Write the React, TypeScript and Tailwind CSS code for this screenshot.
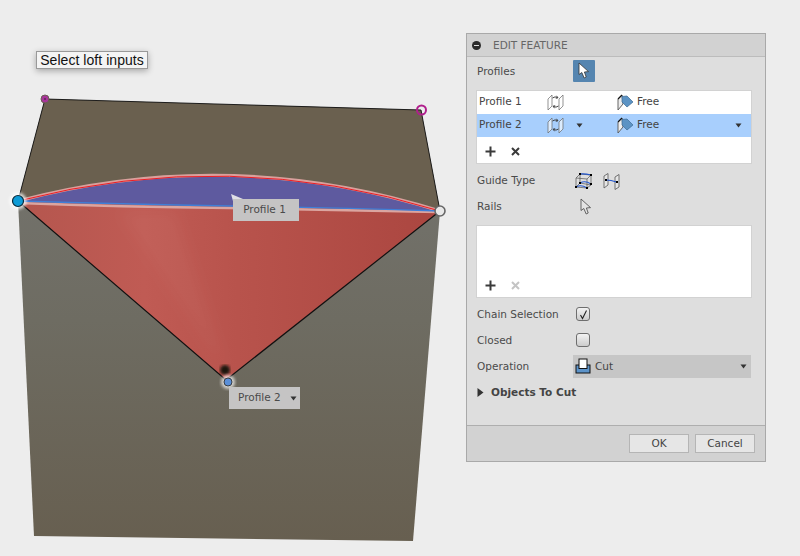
import React from 'react';

const uiFont = "font-['DejaVu_Sans',sans-serif]";

// Cursor arrow used by the selection buttons
const Arrow = ({ fill = '#fff', stroke = '#333' }: { fill?: string; stroke?: string }) => (
  <svg width="12" height="18" viewBox="0 0 12 18">
    <path d="M1 1 L1 12.5 L3.8 10.5 L6.2 16 L8.2 15 L6.4 10 L10.5 9.6 Z" fill={fill} stroke={stroke} strokeWidth="0.8" strokeLinejoin="round" />
  </svg>
);

const ProfileIcon = () => (
  <svg width="17" height="17" viewBox="0 0 17 17" fill="none">
    <path d="M1 5 L5 1 L5 12 L1 16 Z" fill="#fff" fillOpacity="0.6" stroke="#666" strokeWidth="0.7" />
    <path d="M12 5 L16 1 L16 12 L12 16 Z" fill="#fff" fillOpacity="0.6" stroke="#666" strokeWidth="0.7" />
    <path d="M5.5 4 Q8 2 10.500 3.500 M9.500 1.800 L11 3.800 L8.800 4.300" stroke="#333" strokeWidth="0.9" />
    <path d="M11.500 12 Q9 14 6.500 12.500 M7.500 14.200 L6 12.200 L8.200 11.700" stroke="#333" strokeWidth="0.9" />
  </svg>
);

const FreeIcon = () => (
  <svg width="17" height="17" viewBox="0 0 17 17" fill="none">
    <path d="M1 5 L5 1 L6 10 L1 16 Z" fill="#eeeeee" stroke="#555" strokeWidth="0.9" />
    <path d="M1 5 L5 1" stroke="#111" strokeWidth="1.200" />
    <path d="M5 2.500 L10 2 L16 8 L10 13 L5 8 Z" fill="#5c93c4" stroke="#3c6a94" strokeWidth="0.7" />
  </svg>
);

const Caret = ({ className = '' }: { className?: string }) => (
  <svg width="7" height="5" viewBox="0 0 7 5" className={className}>
    <path d="M0.5 0.5 H6.5 L3.5 4.5 Z" fill="#333" />
  </svg>
);

const AddRemove = ({ disabled = false }: { disabled?: boolean }) => (
  <div className="flex items-center gap-[15px] pl-[8px]">
    <svg width="11" height="11" viewBox="0 0 11 11"><path d="M5.5 0.5 V10.5 M0.5 5.5 H10.5" stroke="#3a3a3a" strokeWidth="2" /></svg>
    <svg width="9" height="9" viewBox="0 0 9 9"><path d="M1 1 L8 8 M8 1 L1 8" stroke={disabled ? '#c4c4c4' : '#3a3a3a'} strokeWidth="2" /></svg>
  </div>
);

const ProfileRow = ({ name, selected = false }: { name: string; selected?: boolean }) => (
  <div className={`flex h-[23px] items-center pl-[2px] ${selected ? 'bg-[#a8cffd]' : 'bg-white'}`}>
    <span className="w-[68px] pb-[2px] text-[#444]">{name}</span>
    <ProfileIcon />
    <span className="flex w-[53px] justify-start pl-[12px]">{selected && <Caret />}</span>
    <FreeIcon />
    <span className="ml-[3px] pb-[2px] text-[#444]">Free</span>
    {selected && <Caret className="ml-auto mr-[9px]" />}
  </div>
);

const Label = ({ children, nudge = false }: { children: React.ReactNode; nudge?: boolean }) => (
  <span className={`w-[96px] shrink-0 text-[#4a4a4a] ${nudge ? 'pt-[2px]' : ''}`}>{children}</span>
);

const Checkbox = ({ checked = false }: { checked?: boolean }) => (
  <span className="flex h-[14px] w-[14px] items-center justify-center rounded-[3px] border border-[#6e6e6e] bg-gradient-to-b from-[#f2f2f2] to-[#cccccc]">
    {checked && (
      <svg width="11" height="11" viewBox="0 0 11 11"><path d="M2.5 6 L4.5 9.5 L8.5 1.5" fill="none" stroke="#222" strokeWidth="1.1" /></svg>
    )}
  </span>
);

// The modelled surface: a free canvas, so it is one drawing behind the dialog
const Scene = () => (
  <svg width="800" height="556" viewBox="0 0 800 556" className="absolute left-0 top-0">
    <defs>
      <linearGradient id="lower" x1="0" y1="200" x2="0" y2="541" gradientUnits="userSpaceOnUse">
        <stop offset="0" stopColor="#72716a" />
        <stop offset="0.35" stopColor="#6e6c62" />
        <stop offset="1" stopColor="#675f50" />
      </linearGradient>
      <linearGradient id="red" x1="18" y1="0" x2="440" y2="0" gradientUnits="userSpaceOnUse">
        <stop offset="0" stopColor="#b4564e" />
        <stop offset="0.3" stopColor="#c05b54" />
        <stop offset="0.52" stopColor="#b8534c" />
        <stop offset="1" stopColor="#ab4640" />
      </linearGradient>
      <filter id="soft"><feGaussianBlur stdDeviation="1.6" /></filter>
      <filter id="fan"><feGaussianBlur stdDeviation="7" /></filter>
    </defs>
    <path d="M45 99 L421 110 L440 211 L413 541 L34 536 L18 201 Z" fill="url(#lower)" />
    <path d="M18 201 L45 99 L421 110 L440 211 Q230 145 18 201 Z" fill="#6a604f" />
    <path d="M18 201 L45 99 L421 110 L440 211" fill="none" stroke="#111" strokeWidth="0.9" />
    <path d="M18 201 Q120 204 230 206 Q340 208 440 211 L226 380 Z" fill="url(#red)" />
    <path d="M226 372 L120 212 L175 212 Z" fill="#fff" fillOpacity="0.03" filter="url(#fan)" />
    <path d="M18 201 Q230 145 440 211 Q340 208 230 206 Q120 204 18 201 Z" fill="#5e5a9f" />
    <path d="M18 201 Q230 145 440 211" fill="none" stroke="#d9a09c" strokeWidth="3" />
    <path d="M18 201 Q230 146.500 440 211" fill="none" stroke="#ee1c24" strokeWidth="1" />
    <path d="M18 203 Q120 207 230 208 Q340 210 438 212" fill="none" stroke="#dba5a0" strokeWidth="2.500" />
    <path d="M18 201 Q120 204 230 206 Q340 208 440 211" fill="none" stroke="#3f7fd8" strokeWidth="1.300" />
    <path d="M18 201 L226 380 L440 211" fill="none" stroke="#111" strokeWidth="1.200" />
    <circle cx="225" cy="370" r="5" fill="#1d1210" filter="url(#soft)" />
    <circle cx="45" cy="99" r="4" fill="#a8359a" stroke="#6b5f55" strokeWidth="1" />
    <circle cx="45" cy="99" r="0.800" fill="#222" />
    <circle cx="421.500" cy="110" r="4.500" fill="none" stroke="#b01e8c" strokeWidth="2" />
    <circle cx="18" cy="201" r="8.500" fill="#fff" fillOpacity="0.75" filter="url(#soft)" />
    <circle cx="18" cy="201" r="5.500" fill="#0d9bd6" stroke="#0a2a3a" strokeWidth="1.200" />
    <circle cx="440" cy="211" r="5" fill="#e8e8e8" stroke="#666" strokeWidth="1.600" />
    <circle cx="228" cy="382" r="7" fill="#fff" fillOpacity="0.7" filter="url(#soft)" />
    <circle cx="228" cy="382" r="4" fill="#5a8fd8" stroke="#333" strokeWidth="0.900" />
    <path d="M231 194 L243 199 L233 201 Z" fill="#e0dfe6" />
  </svg>
);

export default function App() {
  return (
    <div className={`relative h-[556px] w-[800px] overflow-hidden bg-[#ededed] text-[10.5px] ${uiFont}`}>
      <Scene />

      {/* Prompt and on-canvas labels */}
      <div className="absolute left-[36px] top-[51px] flex h-[18px] w-[112px] items-center justify-center border border-[#999] bg-[#f4f4f4] font-['Liberation_Sans',sans-serif] text-[14px] tracking-[0.05px] text-[#111] shadow-[0_2px_6px_rgba(0,0,0,0.3)]">
        Select loft inputs
      </div>
      <div className="absolute left-[233px] top-[199px] flex h-[22px] w-[66px] items-center justify-center bg-[#c5c4c4] pr-[3px] text-[#4a4a4a]">
        Profile 1
      </div>
      <div className="absolute left-[229px] top-[387px] flex h-[22px] w-[71px] items-center gap-[9px] bg-[#c5c4c4] pl-[9px] text-[#4a4a4a]">
        Profile 2
        <Caret />
      </div>

      <div className="pl-[466px] pt-[33px]">
        <div className="relative flex h-[429px] w-[300px] flex-col border border-[#a9a9a9] bg-[#dedede]">
          <div className="flex h-[23px] shrink-0 items-center border-b border-[#bcbcbc] bg-[#d2d2d2] pl-[5px] pt-[1px]">
            <span className="flex h-[9px] w-[9px] items-center justify-center rounded-full bg-[#2b2b2b]">
              <span className="h-[1.5px] w-[5px] bg-[#ddd]" />
            </span>
            <span className="ml-[12px] text-[#666]">EDIT FEATURE</span>
          </div>

          <div className="flex flex-1 flex-col px-[9px]">
            <div className="mt-[2px] flex h-[23px] items-center pl-[1px]">
              <Label nudge>Profiles</Label>
              <span className="flex h-[22px] w-[22px] items-center justify-center rounded-[1px] bg-[#5585b0]">
                <Arrow />
              </span>
            </div>

            <div className="mt-[8px] flex h-[74px] w-[276px] flex-col border border-[#d2d2d2] bg-white">
              <ProfileRow name="Profile 1" />
              <ProfileRow name="Profile 2" selected />
              <div className="flex flex-1 items-center pt-[3px]"><AddRemove /></div>
            </div>

            <div className="mt-[4px] flex h-[26px] items-center pl-[1px]">
              <Label>Guide Type</Label>
              <span className="ml-[2px] flex items-center gap-[11px]">
                <svg width="17" height="17" viewBox="0 0 17 17" fill="none">
                  <path d="M1 5 L5 1 L16 2 L16 12 L12 15 L1 14 Z M5 1 L5 10 L16 12 M5 10 L1 14 M1 5 L12 6 L12 15 M12 6 L16 2" stroke="#555" strokeWidth="0.7" />
                  <path d="M5 1 Q10 0.500 16 2 M1 14 Q6 11 12 15 M5 10 Q10 7 16 11" stroke="#2255cc" strokeWidth="1.100" />
                  <g fill="#000"><rect x="4" y="0" width="2" height="2" /><rect x="15" y="1" width="2" height="2" /><rect x="0" y="13" width="2" height="2" /><rect x="11" y="14" width="2" height="2" /><rect x="4" y="9" width="2" height="2" /><rect x="15" y="10" width="2" height="2" /></g>
                </svg>
                <svg width="17" height="17" viewBox="0 0 17 17" fill="none">
                  <path d="M1 3 L5 0.500 L5 12 L1 15 Z M12 4 L16 1.500 L16 14 L12 16.500 Z" fill="#e6e6e6" stroke="#555" strokeWidth="0.8" />
                  <path d="M3 7 Q8 7 13.500 9" stroke="#2255cc" strokeWidth="1.200" />
                  <rect x="2" y="6" width="2" height="2" fill="#000" /><rect x="13" y="8" width="2" height="2" fill="#000" />
                </svg>
              </span>
            </div>

            <div className="flex h-[26px] items-center pl-[1px]">
              <Label>Rails</Label>
              <span className="ml-[7px] flex"><Arrow fill="#e4e4e4" stroke="#444" /></span>
            </div>

            <div className="mt-[5px] flex h-[73px] w-[276px] flex-col justify-end border border-[#d2d2d2] bg-white pb-[6px]">
              <AddRemove disabled />
            </div>

            <div className="mt-[3px] flex h-[26px] items-center pl-[1px]">
              <Label nudge>Chain Selection</Label>
              <span className="ml-[3px] flex"><Checkbox checked /></span>
            </div>
            <div className="flex h-[26px] items-center pl-[1px]">
              <Label nudge>Closed</Label>
              <span className="ml-[3px] flex"><Checkbox /></span>
            </div>
            <div className="flex h-[26px] items-center pl-[1px]">
              <Label nudge>Operation</Label>
              <span className="flex h-[23px] w-[178px] items-center bg-[#c6c6c6] pl-[2px] text-[#444]">
                <svg width="16" height="16" viewBox="0 0 16 16">
                  <rect x="1" y="7" width="14" height="8" fill="#5c93c9" stroke="#111" strokeWidth="1" />
                  <rect x="4" y="1" width="8" height="9.500" fill="#fff" stroke="#111" strokeWidth="1" />
                </svg>
                <span className="ml-[4px] pt-[2px]">Cut</span>
                <Caret className="ml-auto mr-[4px]" />
              </span>
            </div>
            <div className="flex h-[26px] items-center">
              <svg width="7" height="9" viewBox="0 0 7 9" className="ml-[1px]"><path d="M0.5 0 L6.500 4.500 L0.5 9 Z" fill="#333" /></svg>
              <span className="ml-[7px] pt-[2px] font-bold text-[#444]">Objects To Cut</span>
            </div>
          </div>

          <div className="flex h-[36px] shrink-0 items-center justify-end gap-[6px] border-t border-[#aeaeae] bg-[#d2d2d2] pr-[10px]">
            <button className="h-[19px] w-[60px] border border-[#b5b5b5] bg-[#e6e6e6] text-[#444]">OK</button>
            <button className="h-[19px] w-[60px] border border-[#b5b5b5] bg-[#e6e6e6] text-[#444]">Cancel</button>
          </div>
        </div>
      </div>
    </div>
  );
}
